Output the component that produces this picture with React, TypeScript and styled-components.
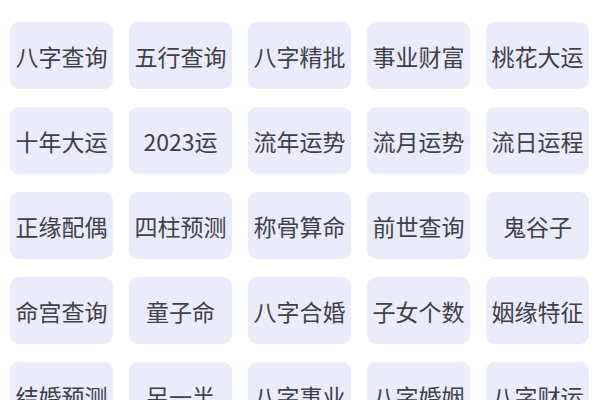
import * as React from "react";
import styled, { createGlobalStyle } from "styled-components";

const items = [
  "八字查询", "五行查询", "八字精批", "事业财富", "桃花大运",
  "十年大运", "2023运", "流年运势", "流月运势", "流日运程",
  "正缘配偶", "四柱预测", "称骨算命", "前世查询", "鬼谷子",
  "命宫查询", "童子命", "八字合婚", "子女个数", "姻缘特征",
  "结婚预测", "另一半", "八字事业", "八字婚姻", "八字财运",
];

const GlobalStyle = createGlobalStyle`
  html, body {
    margin: 0;
    padding: 0;
    background: #ffffff;
    overflow: hidden;
  }
  body {
    font-family: "Noto Sans CJK SC", "Noto Sans", sans-serif;
  }
`;

const Page = styled.div`
  width: 600px;
  height: 400px;
  overflow: hidden;
  background: #ffffff;
`;

const Grid = styled.div`
  display: grid;
  grid-template-columns: repeat(5, 103px);
  grid-auto-rows: 67px;
  column-gap: 16px;
  row-gap: 18px;
  padding: 22px 0 0 10px;
`;

const Tile = styled.button`
  display: flex;
  align-items: center;
  justify-content: center;
  border: none;
  border-radius: 9px;
  background: #eaecfb;
  color: #3f404a;
  font-family: "Noto Sans CJK SC", "Noto Sans", sans-serif;
  font-size: 23px;
  font-weight: 400;
  letter-spacing: 0;
  padding: 0;
  white-space: nowrap;
`;

const App: React.FC = () => (
  <Page>
    <GlobalStyle />
    <Grid>
      {items.map((label) => (
        <Tile key={label}>{label}</Tile>
      ))}
    </Grid>
  </Page>
);

export default App;
